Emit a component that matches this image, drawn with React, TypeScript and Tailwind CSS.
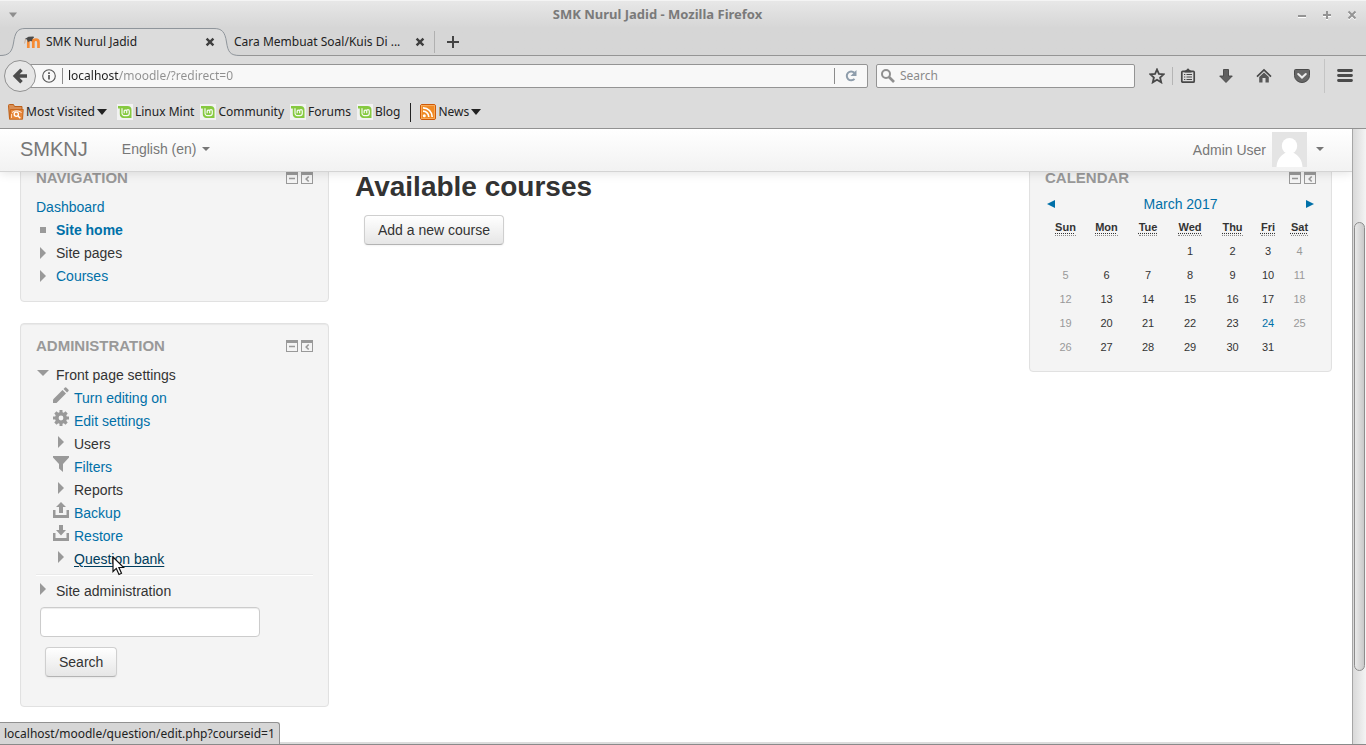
import type { ReactNode } from "react";

const chromeFont = "font-['Noto_Sans','Open_Sans',sans-serif]";
const pageFont = "font-['Liberation_Sans',Arial,sans-serif]";

function TabClose() {
  return (
    <svg width="10" height="10" viewBox="0 0 10 10" className="block">
      <path d="M1.6 1.6L8.4 8.4M8.4 1.6L1.6 8.4" stroke="#3f3f3f" strokeWidth="2.4" />
    </svg>
  );
}

function MoodleIcon() {
  return (
    <svg width="16" height="16" viewBox="0 0 16 16" className="block shrink-0">
      <path
        d="M4.300 14V8.500C4.300 6.400 5.400 5.700 6.900 5.700S9.300 6.500 9.300 8.500V14M9.300 8.500C9.300 6.500 10.400 5.700 11.900 5.700S14.500 6.500 14.500 8.500V14"
        fill="none"
        stroke="#f68b34"
        strokeWidth="2.700"
      />
      <path d="M0.800 5L4.500 2.800L9.500 2.500L10 3.500L8.300 5.200L8 7.200Q5.500 6.600 4 8.200L3 5.500Z" fill="#4a4a4a" />
      <path d="M1.500 5.200L0.600 9.500" stroke="#c9a184" strokeWidth="0.800" fill="none" />
    </svg>
  );
}

function MintIcon() {
  return (
    <svg width="16" height="16" viewBox="0 0 16 16" className="block shrink-0">
      <rect width="16" height="16" fill="#f2f2f2" />
      <path d="M1 2H10.500A4 4 0 0 1 14.500 6V14H6.500A4 4 0 0 1 2.800 10V4.500H1Z" fill="#86c940" />
      <path
        d="M5 4.300V9.300A2.300 2.300 0 0 0 7.300 11.600H10A2.300 2.300 0 0 0 12.300 9.300V7A1.300 1.300 0 0 0 9.700 7V9.300M9.700 7A1.300 1.300 0 0 0 7.200 7V9.300"
        fill="none"
        stroke="#f7fbf2"
        strokeWidth="1.200"
      />
    </svg>
  );
}

function MostVisitedIcon() {
  return (
    <svg width="16" height="16" viewBox="0 0 16 16" className="block shrink-0">
      <path d="M0.500 1.500Q0.500 0.500 1.500 0.500H5.500L6.500 2.500H14V14.500H1.500Z" fill="#d98f55" stroke="#bd5f18" />
      <path d="M2.500 5.500H15.300L14.500 15.300H1.500Z" fill="#e8883a" stroke="#c25e12" strokeWidth="0.800" />
      <path d="M4 8.500Q8.500 5.200 13.500 8.500" stroke="#fff" fill="none" strokeWidth="0.900" />
      <circle cx="8.300" cy="10.300" r="2.100" fill="none" stroke="#fff" strokeWidth="1.300" />
      <path d="M10 12L12.300 14.300" stroke="#fff" strokeWidth="1.400" />
      <path d="M3.500 10V14" stroke="#fbe0c8" strokeWidth="0.900" />
    </svg>
  );
}

function RssIcon() {
  return (
    <svg width="16" height="16" viewBox="0 0 16 16" className="block shrink-0">
      <rect x="0.500" y="0.500" width="15" height="15" rx="1.500" fill="#f08a24" stroke="#cf5a08" />
      <rect x="1.500" y="1.500" width="13" height="13" fill="none" stroke="#f9b36a" strokeWidth="0.800" />
      <circle cx="4.300" cy="11.800" r="1.500" fill="#fff" />
      <path d="M3 7.200A5.800 5.800 0 0 1 8.800 13M3 3.800A9.200 9.200 0 0 1 12.200 13" fill="none" stroke="#fff" strokeWidth="1.700" />
    </svg>
  );
}

function DownTriangle() {
  return (
    <svg width="10" height="6" viewBox="0 0 10 6" className="block shrink-0">
      <path d="M0 0H10L5 6Z" fill="#222" />
    </svg>
  );
}

function Bookmark({ icon, label, menu, className }: { icon: ReactNode; label: string; menu?: boolean; className: string }) {
  return (
    <button type="button" className={`flex items-center gap-[2px] ${className}`}>
      {icon}
      <span className="whitespace-nowrap">{label}</span>
      {menu && <DownTriangle />}
    </button>
  );
}

function BrowserHeader() {
  return (
    <header className={`shrink-0 text-[12px] text-[#222] ${chromeFont}`}>
      <div className="bg-linear-to-b from-[#e8e8e8] to-[#d6d6d6] to-[28px]">
        <div className="flex h-[28px] items-center border-t border-[#f4f4f4] pl-[5px] pr-[6px]">
          <button type="button" aria-label="Window menu" className="grid size-4 shrink-0 place-items-center">
            <svg width="10" height="6" viewBox="0 0 10 6">
              <path d="M1 0.500H9L5 5.500Z" fill="#8e8e8e" />
            </svg>
          </button>
          <h1 className="flex-1 pt-px pr-0 text-center text-[13px] font-bold text-[#7a7a7a]">SMK Nurul Jadid - Mozilla Firefox</h1>
          <div className="flex gap-[9px]">
            <button type="button" aria-label="Minimize" className="grid size-4 place-items-center">
              <svg width="10" height="10" viewBox="0 0 10 10">
                <path d="M1 7H9" stroke="#fff" strokeWidth="2" />
                <path d="M1 6H9" stroke="#949494" strokeWidth="2" />
              </svg>
            </button>
            <button type="button" aria-label="Maximize" className="grid size-4 place-items-center">
              <svg width="10" height="10" viewBox="0 0 10 10">
                <path d="M1 6H9M5 2V10" stroke="#fff" strokeWidth="2" />
                <path d="M1 5H9M5 1V9" stroke="#949494" strokeWidth="2" />
              </svg>
            </button>
            <button type="button" aria-label="Close" className="grid size-4 place-items-center">
              <svg width="10" height="10" viewBox="0 0 10 10">
                <path d="M1.500 2.500L8.500 9.500M8.500 2.500L1.500 9.500" stroke="#fff" strokeWidth="2" />
                <path d="M1.500 1.500L8.500 8.500M8.500 1.500L1.500 8.500" stroke="#949494" strokeWidth="2" />
              </svg>
            </button>
          </div>
        </div>
        <div className="flex h-[28px] border-b border-[#959595]">
          <div className="relative flex h-[28px] w-[240px] items-center pl-[24px] pr-[25px]">
            <svg width="240" height="29" viewBox="0 0 240 29" className="absolute left-0 top-0">
              <path
                d="M0 27.500C9 27.500 12 24 13.500 15C15 5 17 0.500 25 0.500H214C222 0.500 225 4 226.500 14C228 24 230 27.500 240 27.500V29H0Z"
                fill="#dcdcdc"
              />
              <path
                d="M0 27.500C9 27.500 12 24 13.500 15C15 5 17 0.500 25 0.500H214C222 0.500 225 4 226.500 14C228 24 230 27.500 240 27.500"
                fill="none"
                stroke="#8f959b"
              />
            </svg>
            <div className="relative flex flex-1 items-center gap-[6px]">
              <MoodleIcon />
              <span className="flex-1">SMK Nurul Jadid</span>
              <button type="button" aria-label="Close tab">
                <TabClose />
              </button>
            </div>
          </div>
          <div className="-ml-[6px] flex w-[200px] items-center pr-[9px]">
            <span className="flex-1 whitespace-nowrap">Cara Membuat Soal/Kuis Di ...</span>
            <button type="button" aria-label="Close tab">
              <TabClose />
            </button>
          </div>
          <div className="mt-[3px] h-[22px] w-px bg-[#b0b0b0]" />
          <button type="button" aria-label="New tab" className="ml-3 grid w-[12px] place-items-center">
            <svg width="12" height="12" viewBox="0 0 12 12">
              <path d="M0 6H12M6 0V12" stroke="#444" strokeWidth="2" />
            </svg>
          </button>
        </div>
      </div>

      <div className="border-b border-[#929292] bg-[#dcdcdc]">
        <div className="flex h-[40px] items-center pl-1">
          <button
            type="button"
            aria-label="Back"
            className="relative grid size-8 shrink-0 place-items-center rounded-full border border-[#919191] bg-[#e6e6e6]"
          >
            <svg width="16" height="16" viewBox="0 0 16 16">
              <path d="M15 8H5M9.500 1.800L3.300 8L9.500 14.200" fill="none" stroke="#4c4c4c" strokeWidth="3.600" />
            </svg>
          </button>
          <div className="-ml-[6px] flex h-[24px] flex-1 items-center rounded-r-[2px] border border-[#949494] bg-[#f8f8f8] pl-[11px]">
            <svg width="14" height="14" viewBox="0 0 14 14" className="shrink-0">
              <circle cx="7" cy="7" r="6.300" fill="none" stroke="#555" strokeWidth="1.100" />
              <path d="M7 6V10.500M7 3.300V5" stroke="#555" strokeWidth="1.700" />
            </svg>
            <div className="ml-[6px] h-4 w-px bg-[#8b8b8b]" />
            <input
              aria-label="Address"
              defaultValue="localhost/moodle/?redirect=0"
              className="ml-[5px] min-w-0 flex-1 bg-linear-to-r from-[#1f1f1f] from-[51px] to-[#8f8f8f] to-[51px] bg-clip-text text-transparent outline-none"
            />
            <div className="h-4 w-px bg-[#8b8b8b]" />
            <button type="button" aria-label="Reload" className="grid w-[32px] place-items-center">
              <svg width="14" height="14" viewBox="0 0 14 14">
                <path d="M10.500 9.800A4.400 4.400 0 1 1 10.300 3.800" fill="none" stroke="#8e9dab" strokeWidth="2" />
                <path d="M12.500 1V7H6.500Z" fill="#8e9dab" />
              </svg>
            </button>
          </div>
          <div className="ml-2 flex h-[24px] w-[259px] items-center gap-[5px] rounded-[2px] border border-[#949494] bg-[#f8f8f8] pl-1">
            <svg width="14" height="14" viewBox="0 0 14 14" className="shrink-0">
              <circle cx="5" cy="5" r="4" fill="none" stroke="#8f8f8f" strokeWidth="2" />
              <path d="M8 8L13 13" stroke="#8f8f8f" strokeWidth="2.600" />
            </svg>
            <input aria-label="Search the web" placeholder="Search" className="min-w-0 flex-1 outline-none placeholder:text-[#8a8a8a]" />
          </div>
          <button type="button" aria-label="Bookmark this page" className="ml-[14px] grid w-4 place-items-center">
            <svg width="16" height="16" viewBox="0 0 16 16">
              <path d="M8 1.500L9.900 5.900L14.700 6.300L11.100 9.500L12.200 14.300L8 11.700L3.800 14.300L4.900 9.500L1.300 6.300L6.100 5.900Z" fill="none" stroke="#484848" strokeWidth="1.800" />
            </svg>
          </button>
          <div className="ml-[7px] h-[18px] w-px bg-[#b5b5b5]" />
          <button type="button" aria-label="Bookmarks" className="ml-[7px] grid w-4 place-items-center">
            <svg width="16" height="16" viewBox="0 0 16 16">
              <rect x="1.800" y="3.300" width="12.400" height="10.900" rx="1" fill="none" stroke="#484848" strokeWidth="1.700" />
              <path d="M4.500 3L6.200 2L8 0.300L9.800 2L11.500 3V4.500H4.500Z" fill="#484848" />
              <path d="M4 6.500H5.300M6.500 6.500H12M4 9H5.300M6.500 9H12M4 11.500H5.300M6.500 11.500H12" stroke="#484848" strokeWidth="1.200" />
            </svg>
          </button>
          <button type="button" aria-label="Downloads" className="ml-[22px] grid w-4 place-items-center">
            <svg width="16" height="16" viewBox="0 0 16 16">
              <path d="M5.500 1.500H10.500V8H14.300L8 14.500L1.700 8H5.500Z" fill="#606060" stroke="#444" strokeWidth="0.900" />
            </svg>
          </button>
          <button type="button" aria-label="Home" className="ml-[22px] grid w-4 place-items-center">
            <svg width="16" height="16" viewBox="0 0 16 16">
              <path d="M1 8.700L8 1.900L15 8.700" fill="none" stroke="#484848" strokeWidth="1.700" />
              <path d="M3.200 9L8 4.600L12.800 9V14.500H9.500V10H6.500V14.500H3.200Z" fill="#585858" />
            </svg>
          </button>
          <button type="button" aria-label="Save to Pocket" className="ml-[22px] grid w-4 place-items-center">
            <svg width="16" height="16" viewBox="0 0 16 16">
              <path d="M0.500 2.500Q0.500 1.500 1.500 1.500H14.500Q15.500 1.500 15.500 2.500V7.500A7.500 7 0 0 1 0.500 7.500Z" fill="#666" stroke="#4a4a4a" />
              <path d="M4.200 6L8 9.600L11.800 6" fill="none" stroke="#ececec" strokeWidth="2" strokeLinecap="round" />
            </svg>
          </button>
          <div className="ml-[14px] h-[34px] w-px bg-[#c4c4c4]" />
          <button type="button" aria-label="Open menu" className="ml-3 mr-[13px] grid w-4 place-items-center">
            <svg width="16" height="16" viewBox="0 0 16 16">
              <path d="M1.500 2.500H14.500M1.500 7.500H14.500M1.500 12.500H14.500" stroke="#4a4a4a" strokeWidth="2.800" strokeLinecap="round" />
            </svg>
          </button>
        </div>
        <nav aria-label="Bookmarks toolbar" className="flex h-[32px] items-center pl-2">
          <Bookmark icon={<MostVisitedIcon />} label="Most Visited" menu className="" />
          <Bookmark icon={<MintIcon />} label="Linux Mint" className="ml-[10px]" />
          <Bookmark icon={<MintIcon />} label="Community" className="ml-[6px]" />
          <Bookmark icon={<MintIcon />} label="Forums" className="ml-[6px]" />
          <Bookmark icon={<MintIcon />} label="Blog" className="ml-[6px]" />
          <div className="ml-[10px] h-[19px] w-px bg-[#222]" />
          <Bookmark icon={<RssIcon />} label="News" menu className="ml-[9px]" />
        </nav>
      </div>
    </header>
  );
}

function Caret() {
  return (
    <svg width="8" height="4" viewBox="0 0 8 4" className="block">
      <path d="M0 0H8L4 4Z" fill="#777" />
    </svg>
  );
}

function SiteBar() {
  return (
    <div className="relative z-10 flex h-[43px] shrink-0 items-center border-b border-[#d4d4d4] bg-linear-to-b from-white to-[#f2f2f2] px-5 pb-[2px] text-[14px] text-[#777] shadow-[0_1px_10px_rgba(0,0,0,0.12)]">
      <a href="#home" className="text-[20px]">
        SMKNJ
      </a>
      <button type="button" className="ml-[34px] flex items-center gap-[5px]">
        English (en)
        <Caret />
      </button>
      <button type="button" className="ml-auto flex items-center pr-2">
        <span className="pt-[2px]">Admin User</span>
        <svg width="35" height="35" viewBox="0 0 35 35" className="ml-[6px] block">
          <rect width="35" height="35" fill="#e4e4e4" />
          <ellipse cx="17.500" cy="14" rx="7.700" ry="8" fill="#fff" />
          <path d="M4.500 35C5 28 8 24 13 21H22C27 24 30 28 30.500 35Z" fill="#fff" />
        </svg>
        <span className="ml-[9px]">
          <Caret />
        </span>
      </button>
    </div>
  );
}

function BlockHeading({ title }: { title: string }) {
  return (
    <div className="flex h-5 items-center justify-between">
      <h2 className="text-[15px] font-bold uppercase text-[#999]">{title}</h2>
      <div className="flex gap-[3px]">
        <button type="button" aria-label={`Hide ${title} block`}>
          <svg width="12" height="12" viewBox="0 0 12 12" className="block">
            <path d="M0 0H12V12H0ZM1 3V11H11V3Z" fill="#999" fillRule="evenodd" />
            <path d="M3 6.500H9" stroke="#999" strokeWidth="1.500" />
          </svg>
        </button>
        <button type="button" aria-label={`Dock ${title} block`}>
          <svg width="12" height="12" viewBox="0 0 12 12" className="block">
            <path d="M0 0H12V12H0ZM1 3V11H11V3Z" fill="#999" fillRule="evenodd" />
            <path d="M7.700 4.500L5.200 7L7.700 9.500" fill="none" stroke="#999" strokeWidth="1.600" />
          </svg>
        </button>
      </div>
    </div>
  );
}

function Block({ title, className, children }: { title: string; className: string; children: ReactNode }) {
  return (
    <section className={`rounded-[4px] border border-[#e1e1e1] bg-[#f4f4f4] px-[15px] pt-3 shadow-[inset_0_1px_1px_rgba(0,0,0,0.05)] ${className}`}>
      <BlockHeading title={title} />
      {children}
    </section>
  );
}

function RightArrow() {
  return (
    <svg width="6" height="12" viewBox="0 0 6 12" className="block">
      <path d="M0 0L6 6L0 12Z" fill="#999" />
    </svg>
  );
}

function PencilIcon() {
  return (
    <svg width="16" height="16" viewBox="0 0 16 16">
      <path d="M0 16V12.500L9.500 3L13 6.500L3.500 16Z" fill="#999" />
      <path d="M10.500 2L12 0.500Q12.500 0 13.200 0.500L15.500 2.800Q16 3.500 15.500 4L14 5.500Z" fill="#999" />
    </svg>
  );
}

function GearIcon() {
  return (
    <svg width="16" height="16" viewBox="0 0 16 16">
      <path
        d="M6.500 0H9.500V2.200L10.800 2.700L12.500 1.300L14.700 3.500L13.300 5.200L13.800 6.500H16V9.500H13.800L13.300 10.800L14.700 12.500L12.500 14.700L10.800 13.300L9.500 13.800V16H6.500V13.800L5.200 13.300L3.500 14.700L1.300 12.500L2.700 10.800L2.200 9.500H0V6.500H2.200L2.700 5.200L1.300 3.500L3.500 1.300L5.200 2.700L6.500 2.200ZM8 5.600A2.400 2.400 0 1 0 8 10.400A2.400 2.400 0 1 0 8 5.600Z"
        fill="#999"
        fillRule="evenodd"
      />
    </svg>
  );
}

function FilterIcon() {
  return (
    <svg width="16" height="16" viewBox="0 0 16 16">
      <path d="M0 0H16V1.500L10 8V16L6 12.500V8L0 1.500Z" fill="#999" />
    </svg>
  );
}

function BackupIcon() {
  return (
    <svg width="16" height="16" viewBox="0 0 16 16">
      <path d="M0 8H2.500V13H13.500V8H16V16H0Z" fill="#999" />
      <path d="M8 0L13 5H10V11H6V5H3Z" fill="#999" />
    </svg>
  );
}

function RestoreIcon() {
  return (
    <svg width="16" height="16" viewBox="0 0 16 16">
      <path d="M0 8H2.500V13H13.500V8H16V16H0Z" fill="#999" />
      <path d="M6 0H10V5H13L8 10.500L3 5H6Z" fill="#999" />
    </svg>
  );
}

const linkStyle = "text-[#0070a8]";

function TreeRow({ icon, children }: { icon: ReactNode; children: ReactNode }) {
  return (
    <div className="flex h-[23px] gap-[6px]">
      <span className="grid h-[18px] w-[14px] place-items-center">{icon}</span>
      <span className="leading-[23px]">{children}</span>
    </div>
  );
}

const settings: { label: string; icon: ReactNode; link: boolean }[] = [
  { label: "Turn editing on", icon: <PencilIcon />, link: true },
  { label: "Edit settings", icon: <GearIcon />, link: true },
  { label: "Users", icon: <RightArrow />, link: false },
  { label: "Filters", icon: <FilterIcon />, link: true },
  { label: "Reports", icon: <RightArrow />, link: false },
  { label: "Backup", icon: <BackupIcon />, link: true },
  { label: "Restore", icon: <RestoreIcon />, link: true },
];

function NavRow({ icon, children }: { icon: ReactNode; children: ReactNode }) {
  return (
    <li className="flex h-[23px] gap-[6px]">
      <span className="grid h-[22px] w-[14px] place-items-center">{icon}</span>
      <span className="leading-[23px]">{children}</span>
    </li>
  );
}

function NavigationBlock() {
  return (
    <Block title="Navigation" className="pb-[13px]">
      <ul className="mt-2">
        <li className="h-[23px] leading-[23px]">
          <a href="#dashboard" className={linkStyle}>
            Dashboard
          </a>
        </li>
        <NavRow icon={<span className="size-[6px] bg-[#999]" />}>
          <a href="#home" className={`font-bold ${linkStyle}`}>
            Site home
          </a>
        </NavRow>
        <NavRow icon={<RightArrow />}>Site pages</NavRow>
        <NavRow icon={<RightArrow />}>
          <a href="#courses" className={linkStyle}>
            Courses
          </a>
        </NavRow>
      </ul>
    </Block>
  );
}

const buttonStyle =
  "h-[30px] rounded-[4px] border border-[#cfcfcf] border-b-[#b3b3b3] bg-linear-to-b from-white to-[#e6e6e6] px-[13px] shadow-[0_1px_2px_rgba(0,0,0,0.05)]";

function AdministrationBlock() {
  return (
    <Block title="Administration" className="mt-[21px] pb-[29px]">
      <div className="mt-2">
        <TreeRow
          icon={
            <svg width="12" height="6" viewBox="0 0 12 6">
              <path d="M0 0H12L6 6Z" fill="#999" />
            </svg>
          }
        >
          Front page settings
        </TreeRow>
      </div>
      <ul className="pl-[17px]">
        {settings.map((item) => (
          <li key={item.label} className="flex h-[23px] gap-[5px]">
            <span className={`grid w-4 place-items-center ${item.link ? "h-4" : "h-[18px]"}`}>{item.icon}</span>
            {item.link ? (
              <a href="#settings" className={`leading-[23px] ${linkStyle}`}>
                {item.label}
              </a>
            ) : (
              <span className="leading-[23px]">{item.label}</span>
            )}
          </li>
        ))}
        <li className="flex h-[23px] gap-[5px]">
          <span className="grid h-[18px] w-4 place-items-center">
            <RightArrow />
          </span>
          <span className="relative leading-[23px]">
            <a href="#questions" className="text-[#003d5c] underline underline-offset-2">
              Question bank
            </a>
            <svg width="13" height="20" viewBox="0 0 13 20" className="absolute left-[38px] top-[8px]">
              <path d="M1 1V15.500L4.300 12.400L7 18.500L9.500 17.300L6.900 11.500H11.700Z" fill="#fff" stroke="#111" strokeWidth="1.200" />
            </svg>
          </span>
        </li>
      </ul>
      <div className="mt-[3px] h-[2px] border-b border-t border-b-white border-t-[#eaeaea]" />
      <div className="mt-1">
        <TreeRow icon={<RightArrow />}>Site administration</TreeRow>
      </div>
      <div className="mt-1 flex flex-col items-start gap-[10px] pl-1">
        <input
          aria-label="Search settings"
          className="h-[30px] w-[220px] rounded-[4px] border border-[#ccc] bg-white px-2 shadow-[inset_0_1px_1px_rgba(0,0,0,0.075)] outline-none"
        />
        <button type="button" className={`ml-[5px] ${buttonStyle}`}>
          Search
        </button>
      </div>
    </Block>
  );
}

const weekdays = ["Sun", "Mon", "Tue", "Wed", "Thu", "Fri", "Sat"];
const weeks = [
  ["", "", "", "1", "2", "3", "4"],
  ["5", "6", "7", "8", "9", "10", "11"],
  ["12", "13", "14", "15", "16", "17", "18"],
  ["19", "20", "21", "22", "23", "24", "25"],
  ["26", "27", "28", "29", "30", "31", ""],
];

function CalendarBlock() {
  return (
    <Block title="Calendar" className="pb-3">
      <div className={`mt-[5px] flex h-[22px] items-center justify-between px-[2px] ${linkStyle}`}>
        <a href="#previous" aria-label="Previous month">
          <svg width="8" height="8" viewBox="0 0 8 8">
            <path d="M8 0V8L0 4Z" fill="#0070a8" />
          </svg>
        </a>
        <a href="#month">March 2017</a>
        <a href="#next" aria-label="Next month">
          <svg width="8" height="8" viewBox="0 0 8 8">
            <path d="M0 0V8L8 4Z" fill="#0070a8" />
          </svg>
        </a>
      </div>
      <table className="w-full table-fixed text-center text-[11px]">
        <colgroup>
          <col className="w-[41px]" />
          <col className="w-[41px]" />
          <col className="w-[42px]" />
          <col className="w-[42px]" />
          <col className="w-[43px]" />
          <col className="w-[28px]" />
          <col className="w-[35px]" />
        </colgroup>
        <thead>
          <tr className="h-6">
            {weekdays.map((day) => (
              <th key={day} className="p-0 font-bold leading-[14px]">
                <span className="border-b border-dotted border-[#888] pb-[2px] underline decoration-dotted underline-offset-2">{day}</span>
              </th>
            ))}
          </tr>
        </thead>
        <tbody>
          {weeks.map((week) => (
            <tr key={week[1] + week[6]} className="h-6">
              {week.map((day, i) => (
                <td key={i} className={`p-0 ${i === 0 || i === 6 ? "text-[#999]" : ""}`}>
                  {day === "24" ? (
                    <a href="#today" className={linkStyle}>
                      24
                    </a>
                  ) : (
                    day
                  )}
                </td>
              ))}
            </tr>
          ))}
        </tbody>
      </table>
    </Block>
  );
}

export default function App() {
  return (
    <div className="flex h-screen flex-col overflow-hidden border-b border-[#8a8a8a] bg-white">
      <BrowserHeader />
      <div className="relative flex min-h-0 flex-1">
        <div className={`flex min-w-0 flex-1 flex-col overflow-hidden text-[14px] text-[#333] ${pageFont}`}>
          <SiteBar />
          <div className="-mt-[17px] flex items-start px-5">
            <aside className="w-[309px] shrink-0">
              <NavigationBlock />
              <AdministrationBlock />
            </aside>
            <main className="min-w-0 flex-1 pl-[26px] pt-3">
              <h2 className="text-[28px] font-bold leading-[40px]">Available courses</h2>
              <button type="button" className={`ml-[9px] mt-2 ${buttonStyle}`}>
                Add a new course
              </button>
            </main>
            <aside className="w-[303px] shrink-0">
              <CalendarBlock />
            </aside>
          </div>
          <div className="mr-[72px] mt-auto h-[2px] shrink-0 bg-[#dcdcdc]" />
        </div>
        <div className="flex w-[14px] shrink-0 flex-col border-l border-[#a6a6a6] bg-linear-to-r from-[#d9d9d9] to-[#f4f4f4] px-px pb-[73px] pt-[93px]">
          <div className="w-full flex-1 rounded-full border border-[#8d8d8d] bg-linear-to-r from-[#e9e9e9] to-[#c9c9c9]" />
        </div>
        <div
          className={`absolute bottom-0 left-0 z-20 h-[22px] rounded-tr-[3px] border-r border-t border-[#919191] bg-[#d6d6d6] px-1 text-[12px] leading-[22px] text-[#222] ${chromeFont}`}
        >
          localhost/moodle/question/edit.php?courseid=1
        </div>
      </div>
    </div>
  );
}
